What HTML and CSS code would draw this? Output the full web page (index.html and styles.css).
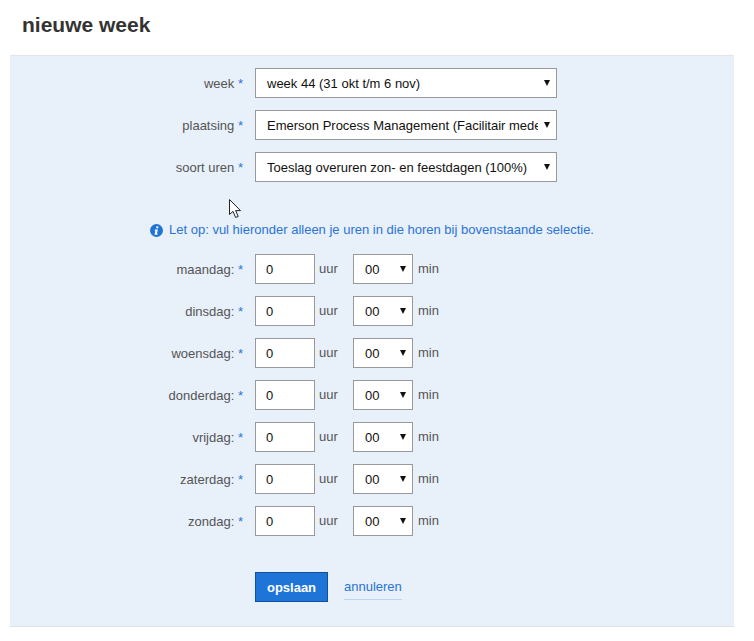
FILE: index.html
```html
<!DOCTYPE html>
<html lang="nl">
<head>
<meta charset="utf-8">
<title>nieuwe week</title>
<link rel="stylesheet" href="styles.css">
</head>
<body>
<h1 class="title">nieuwe week</h1>
<form class="panel">
  <div class="fields">
    <label class="label">week <span class="req">*</span></label>
    <div class="select-wrap wide"><select class="select"><option>week 44 (31 okt t/m 6 nov)</option></select><span class="arrow"></span></div>
    <label class="label">plaatsing <span class="req">*</span></label>
    <div class="select-wrap wide"><select class="select"><option>Emerson Process Management (Facilitair medewerker)</option></select><span class="arrow"></span></div>
    <label class="label">soort uren <span class="req">*</span></label>
    <div class="select-wrap wide"><select class="select"><option>Toeslag overuren zon- en feestdagen (100%)</option></select><span class="arrow"></span></div>
  </div>

  <p class="note">
    <svg class="info" width="13" height="13" viewBox="0 0 13 13" aria-hidden="true"><circle cx="6.5" cy="6.5" r="6.5" fill="#1f74d8"/><ellipse cx="7.3" cy="3.3" rx="1.2" ry="1.1" fill="#fff"/><path d="M4.9 5.6H7.9L6.9 9.6H7.8L7.5 10.8H4.5L5.4 6.8H4.6Z" fill="#fff"/></svg>
    Let op: vul hieronder alleen je uren in die horen bij bovenstaande selectie.
  </p>

  <div class="fields">
    <label class="label">maandag: <span class="req">*</span></label>
    <div class="time"><input class="input" value="0"><span class="unit">uur</span><div class="select-wrap small"><select class="select"><option>00</option></select><span class="arrow"></span></div><span class="unit">min</span></div>
    <label class="label">dinsdag: <span class="req">*</span></label>
    <div class="time"><input class="input" value="0"><span class="unit">uur</span><div class="select-wrap small"><select class="select"><option>00</option></select><span class="arrow"></span></div><span class="unit">min</span></div>
    <label class="label">woensdag: <span class="req">*</span></label>
    <div class="time"><input class="input" value="0"><span class="unit">uur</span><div class="select-wrap small"><select class="select"><option>00</option></select><span class="arrow"></span></div><span class="unit">min</span></div>
    <label class="label">donderdag: <span class="req">*</span></label>
    <div class="time"><input class="input" value="0"><span class="unit">uur</span><div class="select-wrap small"><select class="select"><option>00</option></select><span class="arrow"></span></div><span class="unit">min</span></div>
    <label class="label">vrijdag: <span class="req">*</span></label>
    <div class="time"><input class="input" value="0"><span class="unit">uur</span><div class="select-wrap small"><select class="select"><option>00</option></select><span class="arrow"></span></div><span class="unit">min</span></div>
    <label class="label">zaterdag: <span class="req">*</span></label>
    <div class="time"><input class="input" value="0"><span class="unit">uur</span><div class="select-wrap small"><select class="select"><option>00</option></select><span class="arrow"></span></div><span class="unit">min</span></div>
    <label class="label">zondag: <span class="req">*</span></label>
    <div class="time"><input class="input" value="0"><span class="unit">uur</span><div class="select-wrap small"><select class="select"><option>00</option></select><span class="arrow"></span></div><span class="unit">min</span></div>
  </div>

  <div class="actions">
    <button type="button" class="save">opslaan</button>
    <a class="cancel" href="#">annuleren</a>
  </div>

  <svg class="cursor" width="13" height="20" viewBox="0 0 13 20" aria-hidden="true"><path d="M0.5 0.5V15.5L4 12.4L6.6 18.5L9.2 17.4L6.6 11.6H11.5Z" fill="#fff" stroke="#222" stroke-width="1"/></svg>
</form>
</body>
</html>
```
FILE: styles.css
```css
* { box-sizing: border-box; }
html, body { margin: 0; padding: 0; background: #fff; }
body {
  font-family: "Liberation Sans", Arial, sans-serif;
  font-size: 13px;
  color: #555;
  height: 641px;
  overflow: hidden;
}
.title {
  margin: 0;
  padding: 12px 0 0 22px;
  height: 55px;
  font-size: 21px;
  line-height: 26px;
  font-weight: bold;
  color: #333;
}
.panel {
  position: relative;
  width: 724px;
  height: 572px;
  margin-left: 10px;
  padding-top: 12px;
  background: #e8f0fa;
  border-top: 1px solid #e2e6ea;
  border-bottom: 1px solid #e0e2e4;
}
.fields {
  display: grid;
  grid-template-columns: 233px auto;
  column-gap: 12px;
  row-gap: 12px;
  align-items: center;
  justify-content: start;
}
.label { text-align: right; line-height: 30px; padding-top: 1px; height: 30px; }
.req { color: #2a73d8; }
.select-wrap { position: relative; height: 30px; }
.wide { width: 302px; }
.small { width: 60px; }
.select {
  display: block;
  width: 100%;
  height: 30px;
  margin: 0;
  padding: 0 18px 0 11px;
  border: 1px solid #999;
  border-radius: 0;
  background: #fff;
  color: #111;
  font: 13px "Liberation Sans", Arial, sans-serif;
  appearance: none;
  -webkit-appearance: none;
}
.arrow {
  position: absolute;
  right: 7px;
  top: 12px;
  width: 0;
  height: 0;
  border-left: 3.5px solid transparent;
  border-right: 3.5px solid transparent;
  border-top: 6px solid #111;
}
.note {
  display: flex;
  align-items: center;
  justify-content: center;
  gap: 6px;
  margin: 0;
  height: 72px;
  padding-top: 24px;
  color: #2a73d8;
  font-size: 13px;
  line-height: 20px;
}
.info { flex: none; }
.time { display: flex; align-items: center; height: 30px; }
.input {
  width: 60px;
  height: 30px;
  margin: 0;
  padding: 0 10px;
  border: 1px solid #999;
  border-radius: 0;
  background: #fff;
  color: #111;
  font: 13px "Liberation Sans", Arial, sans-serif;
}
.unit { width: 38px; padding-left: 4px; line-height: 30px; }
.time .unit:last-child { width: auto; padding-left: 5px; }
.actions {
  display: flex;
  align-items: center;
  gap: 16px;
  margin: 36px 0 0 245px;
  height: 30px;
}
.save {
  width: 73px;
  height: 30px;
  padding: 0;
  background: #1f74d8;
  border: 1px solid #124f9c;
  color: #fff;
  font: bold 13px "Liberation Sans", Arial, sans-serif;
}
.cancel {
  display: block;
  color: #2a73d8;
  text-decoration: none;
  line-height: 20px;
  padding-bottom: 2px;
  border-bottom: 1px solid #bcd4f0;
  margin-top: 2px;
}
.cursor { position: absolute; left: 219px; top: 143px; }
```
